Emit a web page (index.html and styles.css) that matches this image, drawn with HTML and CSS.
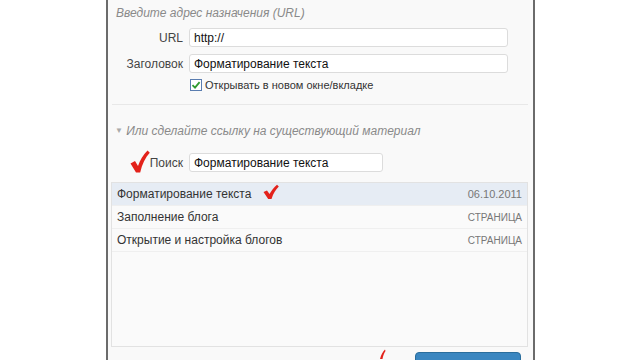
FILE: index.html
```html
<!DOCTYPE html>
<html lang="ru">
<head>
  <meta charset="UTF-8">
  <title>Вставить/изменить ссылку</title>
  <link rel="stylesheet" href="styles.css">
</head>
<body>

  <div class="dialog">

    <div class="intro">Введите адрес назначения (URL)</div>

    <div class="field">
      <label class="label">URL</label>
      <input class="input wide" type="text" value="http://">
    </div>

    <div class="field">
      <label class="label">Заголовок</label>
      <input class="input wide" type="text" value="Форматирование текста">
    </div>

    <div class="check-row">
      <span class="checkbox">
        <svg width="10" height="10" viewBox="0 0 10 10"><path d="M1.5 5.2 L4 7.6 L8.6 2.2" fill="none" stroke="#2f9a2f" stroke-width="1.8"/></svg>
      </span>
      Открывать в новом окне/вкладке
    </div>

    <div class="sep"></div>

    <div class="section-title"><span class="arrow">▼</span> Или сделайте ссылку на существующий материал</div>

    <div class="field search">
      <span class="mark big">
        <svg width="20" height="24" viewBox="0 0 20 24"><path d="M0.5 13.5 L5 11 L8 16 C10 10 13 5 17.5 0.5 L19.8 2.8 C15.5 7.5 12 14 10.2 22.5 L6 22.5 Z" fill="#e3221b"/></svg>
      </span>
      <label class="label">Поиск</label>
      <input class="input short" type="text" value="Форматирование текста">
    </div>

    <div class="results">
      <div class="row active">
        <span>Форматирование текста</span>
        <span class="mark small">
          <svg width="16" height="16" viewBox="0 0 16 16"><path d="M0.5 8 L4 6.5 L6.5 10 C8.5 6.5 11 3.5 14 0.8 L15.8 2.6 C12.8 5.5 10.3 9.5 8.5 15 L5.2 15 Z" fill="#e3221b"/></svg>
        </span>
        <span class="meta">06.10.2011</span>
      </div>
      <div class="row">
        <span>Заполнение блога</span>
        <span class="meta caps">Страница</span>
      </div>
      <div class="row">
        <span>Открытие и настройка блогов</span>
        <span class="meta caps">Страница</span>
      </div>
    </div>

    <div class="footer">
      <span class="mark tip">
        <svg width="8" height="10" viewBox="0 0 8 10"><path d="M2 10 C3 6 4.5 3 7 0.5 L7.5 2 C6 4 5 7 4.5 10 Z" fill="#e3221b"/></svg>
      </span>
      <button class="btn" title="Добавить ссылку"></button>
    </div>

  </div>

</body>
</html>
```

FILE: styles.css
```css
body {
  margin: 0;
  background: #fff;
  font-family: 'Liberation Sans', Arial, sans-serif;
  font-size: 12px;
  color: #333;
}

.dialog {
  margin-left: 106px;
  width: 425px;
  height: 360px;
  background: #f9f9f9;
  border-left: 2px solid #6b6b6b;
  border-right: 2px solid #6b6b6b;
  overflow: hidden;
}

.intro {
  padding: 4px 0 0 8px;
  line-height: 18px;
  font-style: italic;
  color: #8a8a8a;
}

.field {
  display: flex;
  align-items: center;
  margin-top: 6px;
}

.field + .field { margin-top: 7px; }

.label {
  width: 75px;
  text-align: right;
  color: #444;
  flex-shrink: 0;
}

.input {
  margin-left: 6px;
  height: 19px;
  box-sizing: border-box;
  border: 1px solid #dcdcdc;
  border-radius: 3px;
  background: #fff;
  padding: 0 4px;
  font-family: inherit;
  font-size: 12px;
  color: #111;
}

.wide { width: 319px; }
.short { width: 194px; }

.check-row {
  display: flex;
  align-items: center;
  margin-top: 6px;
  padding-left: 82px;
  height: 12px;
  font-size: 11px;
  color: #333;
}

.checkbox {
  width: 10px;
  height: 10px;
  border: 1px solid #5a7db0;
  background: #fff;
  margin-right: 3px;
  display: flex;
}

.sep {
  margin: 13px 5px 0 4px;
  border-top: 1px solid #e8e8e8;
}

.section-title {
  margin-top: 17px;
  padding-left: 7px;
  line-height: 18px;
  font-style: italic;
  color: #8a8a8a;
}

.arrow {
  font-size: 8px;
  font-style: normal;
  color: #aaa;
  vertical-align: 2px;
}

.search {
  margin-top: 13px;
  position: relative;
}

.mark { position: absolute; display: block; line-height: 0; }
.mark.big { left: 22px; top: -3px; }

.results {
  margin: 10px 5px 0 3px;
  height: 165px;
  box-sizing: border-box;
  border: 1px solid #e2e2e2;
  background: #fafafa;
}

.row {
  position: relative;
  display: flex;
  justify-content: space-between;
  align-items: center;
  height: 23px;
  padding: 0 5px;
  border-bottom: 1px solid #efefef;
  box-sizing: border-box;
  color: #333;
}

.row.active { background: #e6ecf4; }

.mark.small { left: 151px; top: 1px; }

.meta { color: #777; font-size: 11px; }
.caps { text-transform: uppercase; font-size: 10px; }

.footer {
  position: relative;
  display: flex;
  justify-content: flex-end;
  margin-top: 5px;
  padding-right: 12px;
}

.mark.tip { left: 270px; top: -3px; }

.btn {
  width: 106px;
  height: 24px;
  border: 1px solid #2a6d9c;
  border-radius: 4px;
  background: #3a86c0;
}
```
